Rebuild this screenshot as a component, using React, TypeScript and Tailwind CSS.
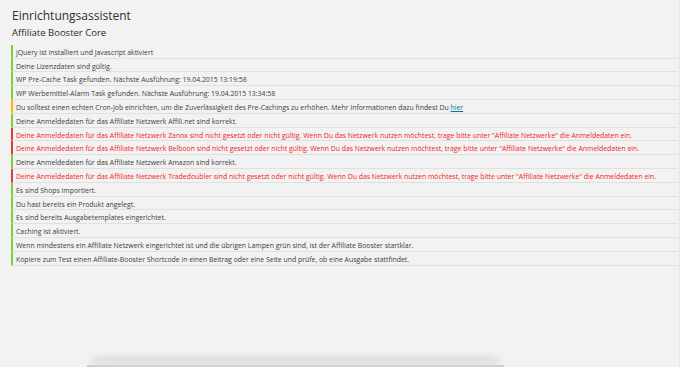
import React from 'react';

type Status = 'ok' | 'warn' | 'error';

const checks: { status: Status; text: React.ReactNode }[] = [
  { status: 'ok', text: 'jQuery ist installiert und Javascript aktiviert' },
  { status: 'ok', text: 'Deine Lizenzdaten sind gültig.' },
  { status: 'ok', text: 'WP Pre-Cache Task gefunden. Nächste Ausführung: 19.04.2015 13:19:58' },
  { status: 'ok', text: 'WP Werbemittel-Alarm Task gefunden. Nächste Ausführung: 19.04.2015 13:34:58' },
  {
    status: 'warn',
    text: (
      <>
        Du solltest einen echten Cron-Job einrichten, um die Zuverlässigkeit des Pre-Cachings zu erhöhen. Mehr
        Informationen dazu findest Du <a className="text-[#0074a2] underline">hier</a>
      </>
    ),
  },
  { status: 'ok', text: 'Deine Anmeldedaten für das Affiliate Netzwerk Affili.net sind korrekt.' },
  {
    status: 'error',
    text: 'Deine Anmeldedaten für das Affiliate Netzwerk Zanox sind nicht gesetzt oder nicht gültig. Wenn Du das Netzwerk nutzen möchtest, trage bitte unter "Affiliate Netzwerke" die Anmeldedaten ein.',
  },
  {
    status: 'error',
    text: 'Deine Anmeldedaten für das Affiliate Netzwerk Belboon sind nicht gesetzt oder nicht gültig. Wenn Du das Netzwerk nutzen möchtest, trage bitte unter "Affiliate Netzwerke" die Anmeldedaten ein.',
  },
  { status: 'ok', text: 'Deine Anmeldedaten für das Affiliate Netzwerk Amazon sind korrekt.' },
  {
    status: 'error',
    text: 'Deine Anmeldedaten für das Affiliate Netzwerk Tradedoubler sind nicht gesetzt oder nicht gültig. Wenn Du das Netzwerk nutzen möchtest, trage bitte unter "Affiliate Netzwerke" die Anmeldedaten ein.',
  },
  { status: 'ok', text: 'Es sind Shops importiert.' },
  { status: 'ok', text: 'Du hast bereits ein Produkt angelegt.' },
  { status: 'ok', text: 'Es sind bereits Ausgabetemplates eingerichtet.' },
  { status: 'ok', text: 'Caching ist aktiviert.' },
  {
    status: 'ok',
    text: 'Wenn mindestens ein Affiliate Netzwerk eingerichtet ist und die übrigen Lampen grün sind, ist der Affiliate Booster startklar.',
  },
  {
    status: 'ok',
    text: 'Kopiere zum Test einen Affiliate-Booster Shortcode in einen Beitrag oder eine Seite und prüfe, ob eine Ausgabe stattfindet.',
  },
];

const App: React.FC = () => {
  return (
    <div className="h-[367px] overflow-hidden flex flex-col bg-[#f3f2f2] font-['Open_Sans',sans-serif] border-r border-[#e6e6e6]">
      <div className="flex-1 pl-[11px] pr-[1px]">
        <h1 className="pt-[10px] pl-px text-[12px] leading-none font-medium text-[#2e2e2e]">Einrichtungsassistent</h1>
        <h2 className="mt-[6.3px] pl-px text-[9.5px] leading-none text-[#2a2a2a]">Affiliate Booster Core</h2>

        {/* Checklist */}
        <div className="mt-[7px]">
          {checks.map((c, i) => (
            <div
              key={i}
              className={`h-[13.8px] pl-[3px] pt-[3px] border-l-2 border-b border-b-[#e0e0e0] text-[6.9px] leading-[10px] whitespace-nowrap ${
                c.status === 'ok'
                  ? 'border-l-[#7ad03a] text-[#3c3c3c]'
                  : c.status === 'warn'
                    ? 'border-l-[#ffba00] text-[#3c3c3c]'
                    : 'border-l-[#dd3d36] text-[#f01c1c]'
              }`}
            >
              {c.text}
            </div>
          ))}
        </div>
      </div>

      {/* dock shadow */}
      <div className="ml-[87px] w-[417px] h-[12px] flex flex-col justify-end">
        <div className="h-[9px] mx-[4px] rounded-t-[8px] bg-[#dedede] blur-[3px]" />
        <div className="h-[2px] bg-[#c9c9c9]" />
      </div>
    </div>
  );
};

export default App;
